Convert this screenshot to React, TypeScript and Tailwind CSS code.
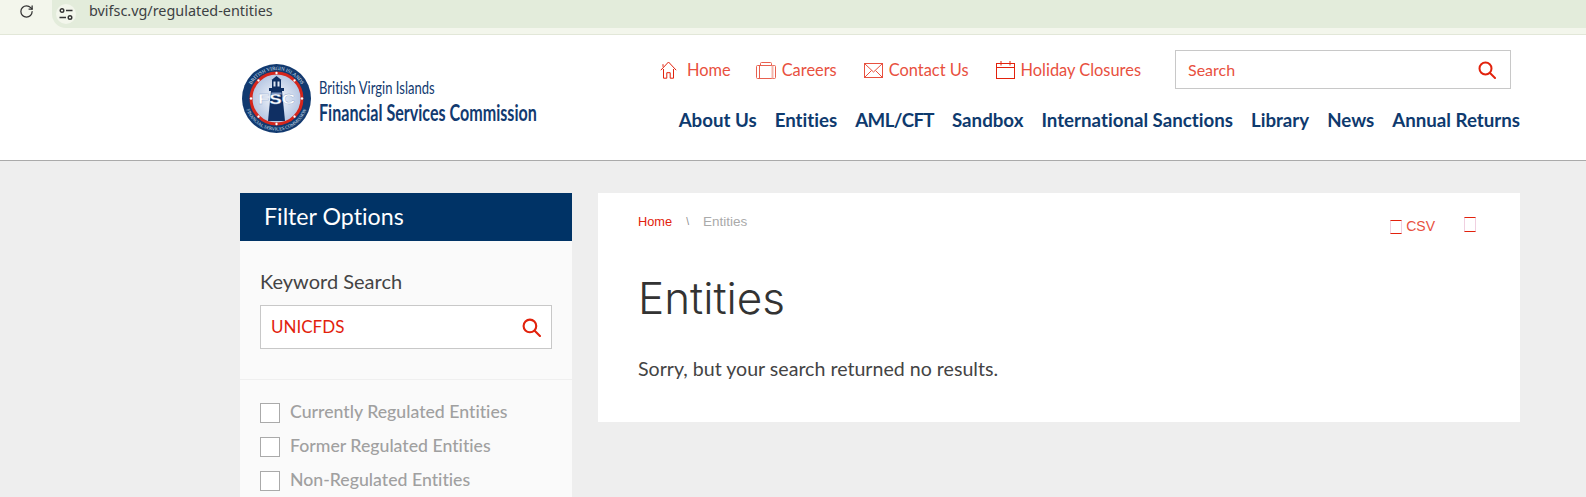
import React from 'react';
import { RotateCw } from 'lucide-react';

const topLinks = [
  { label: 'Home', gap: 'ml-[10px]', box: 'mr-[-2px]', icon: <HomeIcon /> },
  { label: 'Careers', gap: 'ml-[6px]', box: '', icon: <CaseIcon /> },
  { label: 'Contact Us', gap: 'ml-[6px]', box: '', icon: <MailIcon /> },
  { label: 'Holiday Closures', gap: 'ml-[6px]', box: '', icon: <CalendarIcon /> },
];

const mainLinks = [
  { label: 'About Us', cls: '' },
  { label: 'Entities', cls: '' },
  { label: 'AML/CFT', cls: 'tracking-[-0.6px]' },
  { label: 'Sandbox', cls: '' },
  { label: 'International Sanctions', cls: '' },
  { label: 'Library', cls: '' },
  { label: 'News', cls: '' },
  { label: 'Annual Returns', cls: '' },
];
const filters = ['Currently Regulated Entities', 'Former Regulated Entities', 'Non-Regulated Entities'];

function HomeIcon() {
  return (
    <svg width="17" height="18" viewBox="0 0 17 18" fill="none" stroke="#e2220c" strokeWidth="1">
      <path d="M.8 9.200 8.500 1l7.700 8.200M3.500 8v9.200h3.300v-5.500h3.400v5.500h3.300V8M3 3.200v2.600" />
    </svg>
  );
}

function CaseIcon() {
  return (
    <svg width="20" height="17" viewBox="0 0 20 17" fill="none" stroke="#e8604f" strokeWidth="1">
      <rect x=".5" y="3.500" width="19" height="13" rx="1" />
      <path d="M4.500 3.500v-2a1 1 0 0 1 1-1h9a1 1 0 0 1 1 1v2M3.500 3.500v13" />
      <path d="M16.500 3.500v13" stroke="#f3b4aa" strokeWidth="2" />
    </svg>
  );
}

function MailIcon() {
  return (
    <svg width="19" height="15" viewBox="0 0 19 15" fill="none" stroke="#e8503e" strokeWidth="1">
      <rect x=".5" y=".5" width="18" height="14" />
      <path d="m.5.5 9 8.500 9-8.500M.5 14.500l7-7M18.500 14.500l-7-7" />
    </svg>
  );
}

function CalendarIcon() {
  return (
    <svg width="19" height="18" viewBox="0 0 19 18" fill="none" stroke="#e2220c" strokeWidth="1">
      <rect x=".5" y="2.500" width="18" height="15" />
      <path d="M.5 6.500h18M5 0v4.500M14 0v4.500" />
    </svg>
  );
}

function SearchIcon({ size }: { size: number }) {
  return (
    <svg width={size} height={size} viewBox="0 0 18 18" fill="none" stroke="#e2220c" strokeWidth="2">
      <circle cx="7.500" cy="7.500" r="6" />
      <path d="m12 12 5 5" strokeLinecap="round" />
    </svg>
  );
}

function SiteIcon() {
  return (
    <svg width="14" height="12" viewBox="0 0 14 12" fill="none" stroke="#333" strokeWidth="1.400">
      <circle cx="3" cy="2.500" r="1.800" />
      <path d="M7 2.500h6.500M.5 9.500H7" />
      <circle cx="11" cy="9.500" r="1.800" />
    </svg>
  );
}

function Seal() {
  return (
    <svg width="69" height="69" viewBox="0 0 69 69">
      <defs>
        <radialGradient id="seal-bg" cx="50%" cy="50%" r="50%">
          <stop offset="0%" stopColor="#f6f8fc" />
          <stop offset="100%" stopColor="#b4c5e2" />
        </radialGradient>
        <path id="seal-top" d="M6 34.500a28.500 28.500 0 0 1 57 0" />
        <path id="seal-bottom" d="M2.500 34.500a32 32 0 0 0 64 0" />
      </defs>
      <circle cx="34.500" cy="34.500" r="34.500" fill="#123a70" />
      <circle cx="34.500" cy="34.500" r="25.500" fill="url(#seal-bg)" stroke="#d5261c" strokeWidth="3" />
      {[0, 45, 90, 135, 180, 225, 270, 315].map((a) => (
        <circle key={a} cx="34.500" cy="9" r="1.200" fill="#fff" transform={`rotate(${a} 34.500 34.500)`} />
      ))}
      <text fontSize="5" fill="#dbe4f2" fontFamily="'Liberation Serif', serif">
        <textPath href="#seal-top" startOffset="50%" textAnchor="middle">BRITISH VIRGIN ISLANDS</textPath>
      </text>
      <text fontSize="4.600" fill="#dbe4f2" fontFamily="'Liberation Serif', serif">
        <textPath href="#seal-bottom" startOffset="50%" textAnchor="middle">FINANCIAL SERVICES COMMISSION</textPath>
      </text>
      <path d="M29 27h11l3 30H26z" fill="#0f2f63" />
      <path d="M27 24h15v3H27zM30 16h9v8h-9zM29.500 16l5-4 5 4z" fill="#0f2f63" />
      <path d="M31.500 17.500h2v5h-2zM35.500 17.500h2v5h-2z" fill="#dfe7f4" />
      <path d="M29.500 28.500h10l.2 2h-10.400z" fill="#7f97c2" />
      <text x="34.500" y="40" textAnchor="middle" textLength="37" lengthAdjust="spacingAndGlyphs" fontSize="15" fontWeight="700" fill="#fff" stroke="#8da4cc" strokeWidth=".3" fontFamily="'Liberation Sans', sans-serif">FSC</text>
    </svg>
  );
}

const App: React.FC = () => {
  return (
    <div className="h-[497px] overflow-hidden bg-[#eeeeee] font-['Lato',sans-serif] [font-variant-ligatures:none]">
      {/* browser chrome */}
      <div className="flex h-[35px] items-start border-b border-[#e2e7d8] bg-[#f3f6ec]">
        <RotateCw className="ml-[19px] mt-[4px] text-[#333]" size={15} strokeWidth={2} />
        <div className="ml-[18px] flex h-[28px] flex-1 items-center rounded-bl-[14px] bg-[#e3ecdb] pl-[4px]">
          <div className="flex h-[20px] w-[20px] items-center justify-center rounded-full bg-[#f3f6ec]">
            <SiteIcon />
          </div>
          <span className="relative top-[-3px] ml-[13px] font-['Noto_Sans',sans-serif] text-[14.400px] leading-none text-[#3c4043]">bvifsc.vg/regulated-entities</span>
        </div>
      </div>

      {/* site header */}
      <header className="flex h-[126px] border-b border-[#aaaaaa] bg-white pl-[242px] pr-[66px]">
        <div className="mt-[29px] flex h-[69px] items-center">
          <Seal />
          <div className="ml-[8px] mt-[4px] w-[220px] text-[#123a70]">
            <div className="origin-left scale-x-[0.724] whitespace-nowrap text-[18px] leading-[20px]">British Virgin Islands</div>
            <div className="mt-[4px] origin-left scale-x-[0.715] whitespace-nowrap text-[22.500px] font-bold leading-[24px]">Financial Services Commission</div>
          </div>
        </div>

        <div className="ml-auto flex flex-col items-end">
          <div className="mt-[15px] flex items-center pr-[9px]">
            <nav className="mt-[2px] flex items-center gap-[27px]">
              {topLinks.map((l) => (
                <a key={l.label} className={`flex items-center text-[16.400px] text-[#e8503e] ${l.box}`}>
                  {l.icon}
                  <span className={l.gap}>{l.label}</span>
                </a>
              ))}
            </nav>
            <div className="ml-[34px] flex h-[39px] w-[336px] items-center justify-between border border-[#c8c8c8] pl-[12px] pr-[14px] text-[16px] text-[#e8503e]">
              <span>Search</span>
              <SearchIcon size={18} />
            </div>
          </div>
          <nav className="mt-[19px] flex gap-[18px] text-[18.700px] font-bold leading-[24px] text-[#0e3a6e]">
            {mainLinks.map((l) => (
              <a key={l.label} className={l.cls}>{l.label}</a>
            ))}
          </nav>
        </div>
      </header>

      {/* content */}
      <main className="flex items-start gap-[26px] pl-[240px] pr-[66px] pt-[32px]">
        <aside className="h-[304px] w-[332px] shrink-0 bg-[#fafafa]">
          <div className="flex h-[48px] items-center bg-[#003366] pb-[2px] pl-[24px] text-[23.200px] text-white">Filter Options</div>
          <div className="border-b border-[#efefef] px-[20px] pb-[30px] pt-[27px]">
            <label className="block text-[20px] leading-[26px] text-[#444]">Keyword Search</label>
            <div className="mt-[11px] flex h-[44px] items-center justify-between border border-[#c8c8c8] bg-white pl-[10px] pr-[10px] text-[17px] text-[#e2220c]">
              <span>UNICFDS</span>
              <SearchIcon size={19} />
            </div>
          </div>
          <div className="flex flex-col gap-[14px] px-[20px] pt-[23px]">
            {filters.map((f) => (
              <label key={f} className="flex h-[20px] items-center text-[17.700px] font-medium text-[#a0a0a0]">
                <span className="h-[20px] w-[20px] border border-[#aaa] bg-white" />
                <span className="relative top-[-1px] ml-[10px]">{f}</span>
              </label>
            ))}
          </div>
        </aside>

        <section className="h-[229px] flex-1 bg-white pl-[40px] pr-[44px] pt-[20px]">
          <div className="flex items-start justify-between">
            <div className="flex items-center font-['Liberation_Sans',sans-serif] text-[12.800px] leading-[18px]">
              <a className="text-[#e2220c]">Home</a>
              <span className="ml-[14px] text-[10px] text-[#888]">\</span>
              <span className="ml-[14px] text-[13.500px] text-[#aaa]">Entities</span>
            </div>
            <div className="flex items-start pt-[4px] font-['Liberation_Sans',sans-serif] text-[14px] leading-[18px] text-[#e8503e]">
              <span className="mt-[3px] h-[14px] w-[12px] border border-x-[#f0d0e0] border-y-[#e2220c]" />
              <span className="ml-[4px]">CSV</span>
              <span className="ml-[29px] h-[15px] w-[12px] border border-x-[#f0d0e0] border-y-[#e2220c]" />
            </div>
          </div>
          <h1 className="mt-[33px] font-['Inter',sans-serif] text-[44px] font-light leading-[60px] text-[#333]">Entities</h1>
          <p className="mt-[27px] text-[19.600px] leading-[28px] text-[#444]">Sorry, but your search returned no results.</p>
        </section>
      </main>
    </div>
  );
};

export default App;
